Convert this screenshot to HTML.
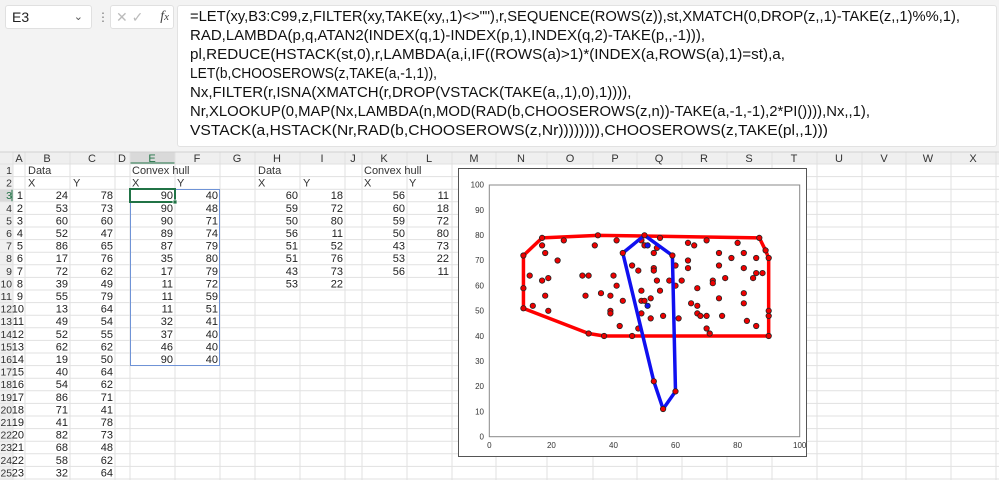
<!DOCTYPE html>
<html><head><meta charset="utf-8"><style>
html,body{margin:0;padding:0;width:999px;height:480px;overflow:hidden;background:#f3f3f3;font-family:"Liberation Sans",Arial,sans-serif}
.abs{position:absolute}
</style></head><body>
<div class="abs" style="left:5px;top:5px;width:85px;height:22px;background:#fff;border:1px solid #e0e0e0;border-radius:3px;font-size:14px;line-height:22px;color:#222"><span style="padding-left:6px">E3</span><span style="position:absolute;right:8px;top:0;font-size:11px;color:#555">&#8964;</span></div>
<div class="abs" style="left:97px;top:10px;color:#777;font-size:12px;">&#8942;</div>
<div class="abs" style="left:110px;top:5px;width:62px;height:22px;background:#fff;border:1px solid #e0e0e0;border-radius:3px;font-size:14px;line-height:22px;color:#bbb"><span style="padding-left:5px">&#10005;</span> <span>&#10003;</span><span style="position:absolute;right:4px;color:#444;font-family:'Liberation Serif',serif;font-style:italic;font-size:14px">f<span style="font-size:11px">x</span></span></div>
<div class="abs" style="left:177px;top:5px;width:818px;height:140px;background:#fff;border:1px solid #e2e2e2;border-radius:3px"></div>
<svg class="abs" style="left:0;top:0" width="999" height="480" font-family="Liberation Sans, Arial, sans-serif">
<g font-size="15" fill="#111">
<text x="190" y="21" textLength="770" lengthAdjust="spacingAndGlyphs">=LET(xy,B3:C99,z,FILTER(xy,TAKE(xy,,1)&lt;&gt;""),r,SEQUENCE(ROWS(z)),st,XMATCH(0,DROP(z,,1)-TAKE(z,,1)%%,1),</text>
<text x="190" y="40">RAD,LAMBDA(p,q,ATAN2(INDEX(q,1)-INDEX(p,1),INDEX(q,2)-TAKE(p,,-1))),</text>
<text x="190" y="59" textLength="595" lengthAdjust="spacingAndGlyphs">pl,REDUCE(HSTACK(st,0),r,LAMBDA(a,i,IF((ROWS(a)&gt;1)*(INDEX(a,ROWS(a),1)=st),a,</text>
<text x="190" y="78" textLength="247" lengthAdjust="spacingAndGlyphs">LET(b,CHOOSEROWS(z,TAKE(a,-1,1)),</text>
<text x="190" y="97">Nx,FILTER(r,ISNA(XMATCH(r,DROP(VSTACK(TAKE(a,,1),0),1)))),</text>
<text x="190" y="116" textLength="680" lengthAdjust="spacingAndGlyphs">Nr,XLOOKUP(0,MAP(Nx,LAMBDA(n,MOD(RAD(b,CHOOSEROWS(z,n))-TAKE(a,-1,-1),2*PI()))),Nx,,1),</text>
<text x="190" y="135" textLength="638" lengthAdjust="spacingAndGlyphs">VSTACK(a,HSTACK(Nr,RAD(b,CHOOSEROWS(z,Nr)))))))),CHOOSEROWS(z,TAKE(pl,,1)))</text>
</g>
<rect x="0" y="152" width="999" height="328" fill="#fff"/>
<rect x="0" y="152" width="999" height="12" fill="#efefef"/>
<rect x="0" y="152" width="13" height="328" fill="#efefef"/>
<rect x="130" y="152" width="45" height="12" fill="#d9d9d9"/>
<rect x="130" y="162.5" width="45" height="1.5" fill="#217346"/>
<rect x="0" y="189.2" width="13" height="12.6" fill="#d9d9d9"/>
<rect x="11.5" y="189.2" width="1.5" height="12.6" fill="#217346"/>
<g stroke="#e1e1e1" stroke-width="1">
<path d="M13 152V480M25 152V480M70 152V480M115 152V480M130 152V480M175 152V480M220 152V480M255 152V480M300 152V480M345 152V480M362 152V480M407 152V480M452 152V480M496 152V480M547 152V480M593 152V480M637 152V480M682 152V480M727 152V480M772 152V480M817 152V480M862 152V480M906 152V480M951 152V480M996 152V480"/>
<path d="M0 164H999M0 176.6H999M0 189.2H999M0 201.8H999M0 214.4H999M0 227H999M0 239.6H999M0 252.2H999M0 264.8H999M0 277.4H999M0 290H999M0 302.6H999M0 315.2H999M0 327.8H999M0 340.4H999M0 353H999M0 365.6H999M0 378.2H999M0 390.8H999M0 403.4H999M0 416H999M0 428.6H999M0 441.2H999M0 453.8H999M0 466.4H999M0 479H999"/>
</g>
<path d="M0 152H999" stroke="#d0d0d0"/>
<g font-size="11" fill="#333" text-anchor="middle">
<text x="19" y="162">A</text><text x="47" y="162">B</text><text x="92" y="162">C</text><text x="122" y="162">D</text><text x="152" y="162" fill="#217346">E</text><text x="197" y="162">F</text><text x="237" y="162">G</text><text x="277" y="162">H</text><text x="322" y="162">I</text><text x="353" y="162">J</text><text x="384" y="162">K</text><text x="429" y="162">L</text><text x="474" y="162">M</text><text x="521" y="162">N</text><text x="570" y="162">O</text><text x="615" y="162">P</text><text x="659" y="162">Q</text><text x="704" y="162">R</text><text x="749" y="162">S</text><text x="794" y="162">T</text><text x="839" y="162">U</text><text x="884" y="162">V</text><text x="928" y="162">W</text><text x="973" y="162">X</text>
</g>
<g font-size="10.5" fill="#333" text-anchor="end">
<text x="12" y="174">1</text><text x="12" y="186.6">2</text><text x="12" y="199.2" fill="#217346">3</text><text x="12" y="211.8">4</text><text x="12" y="224.4">5</text><text x="12" y="237">6</text><text x="12" y="249.6">7</text><text x="12" y="262.2">8</text><text x="12" y="274.8">9</text><text x="12" y="287.4" textLength="11.5" lengthAdjust="spacingAndGlyphs">10</text><text x="12" y="300" textLength="11.5" lengthAdjust="spacingAndGlyphs">11</text><text x="12" y="312.6" textLength="11.5" lengthAdjust="spacingAndGlyphs">12</text><text x="12" y="325.2" textLength="11.5" lengthAdjust="spacingAndGlyphs">13</text><text x="12" y="337.8" textLength="11.5" lengthAdjust="spacingAndGlyphs">14</text><text x="12" y="350.4" textLength="11.5" lengthAdjust="spacingAndGlyphs">15</text><text x="12" y="363" textLength="11.5" lengthAdjust="spacingAndGlyphs">16</text><text x="12" y="375.6" textLength="11.5" lengthAdjust="spacingAndGlyphs">17</text><text x="12" y="388.2" textLength="11.5" lengthAdjust="spacingAndGlyphs">18</text><text x="12" y="400.8" textLength="11.5" lengthAdjust="spacingAndGlyphs">19</text><text x="12" y="413.4" textLength="11.5" lengthAdjust="spacingAndGlyphs">20</text><text x="12" y="426" textLength="11.5" lengthAdjust="spacingAndGlyphs">21</text><text x="12" y="438.6" textLength="11.5" lengthAdjust="spacingAndGlyphs">22</text><text x="12" y="451.2" textLength="11.5" lengthAdjust="spacingAndGlyphs">23</text><text x="12" y="463.8" textLength="11.5" lengthAdjust="spacingAndGlyphs">24</text><text x="12" y="476.4" textLength="11.5" lengthAdjust="spacingAndGlyphs">25</text>
</g>
<g font-size="11" fill="#333">
<text x="28" y="174">Data</text><text x="132" y="174">Convex hull</text><text x="258" y="174">Data</text><text x="364" y="174">Convex hull</text>
<text x="28" y="186.6">X</text><text x="73" y="186.6">Y</text><text x="132" y="186.6">X</text><text x="177" y="186.6">Y</text><text x="258" y="186.6">X</text><text x="303" y="186.6">Y</text><text x="364" y="186.6">X</text><text x="409" y="186.6">Y</text>
</g>
<g font-size="11" fill="#222" text-anchor="end">
<text x="23" y="199.2">1</text><text x="23" y="211.8">2</text><text x="23" y="224.4">3</text><text x="23" y="237">4</text><text x="23" y="249.6">5</text><text x="23" y="262.2">6</text><text x="23" y="274.8">7</text><text x="23" y="287.4">8</text><text x="23" y="300">9</text><text x="24" y="312.6">10</text><text x="24" y="325.2">11</text><text x="24" y="337.8">12</text><text x="24" y="350.4">13</text><text x="24" y="363">14</text><text x="24" y="375.6">15</text><text x="24" y="388.2">16</text><text x="24" y="400.8">17</text><text x="24" y="413.4">18</text><text x="24" y="426">19</text><text x="24" y="438.6">20</text><text x="24" y="451.2">21</text><text x="24" y="463.8">22</text><text x="24" y="476.4">23</text>
<text x="68" y="199.2">24</text><text x="68" y="211.8">53</text><text x="68" y="224.4">60</text><text x="68" y="237">52</text><text x="68" y="249.6">86</text><text x="68" y="262.2">17</text><text x="68" y="274.8">72</text><text x="68" y="287.4">39</text><text x="68" y="300">55</text><text x="68" y="312.6">13</text><text x="68" y="325.2">49</text><text x="68" y="337.8">52</text><text x="68" y="350.4">62</text><text x="68" y="363">19</text><text x="68" y="375.6">40</text><text x="68" y="388.2">54</text><text x="68" y="400.8">86</text><text x="68" y="413.4">71</text><text x="68" y="426">41</text><text x="68" y="438.6">82</text><text x="68" y="451.2">68</text><text x="68" y="463.8">58</text><text x="68" y="476.4">32</text>
<text x="113" y="199.2">78</text><text x="113" y="211.8">73</text><text x="113" y="224.4">60</text><text x="113" y="237">47</text><text x="113" y="249.6">65</text><text x="113" y="262.2">76</text><text x="113" y="274.8">62</text><text x="113" y="287.4">49</text><text x="113" y="300">79</text><text x="113" y="312.6">64</text><text x="113" y="325.2">54</text><text x="113" y="337.8">55</text><text x="113" y="350.4">62</text><text x="113" y="363">50</text><text x="113" y="375.6">64</text><text x="113" y="388.2">62</text><text x="113" y="400.8">71</text><text x="113" y="413.4">41</text><text x="113" y="426">78</text><text x="113" y="438.6">73</text><text x="113" y="451.2">48</text><text x="113" y="463.8">62</text><text x="113" y="476.4">64</text>
<text x="173" y="199.2">90</text><text x="173" y="211.8">90</text><text x="173" y="224.4">90</text><text x="173" y="237">89</text><text x="173" y="249.6">87</text><text x="173" y="262.2">35</text><text x="173" y="274.8">17</text><text x="173" y="287.4">11</text><text x="173" y="300">11</text><text x="173" y="312.6">11</text><text x="173" y="325.2">32</text><text x="173" y="337.8">37</text><text x="173" y="350.4">46</text><text x="173" y="363">90</text>
<text x="218" y="199.2">40</text><text x="218" y="211.8">48</text><text x="218" y="224.4">71</text><text x="218" y="237">74</text><text x="218" y="249.6">79</text><text x="218" y="262.2">80</text><text x="218" y="274.8">79</text><text x="218" y="287.4">72</text><text x="218" y="300">59</text><text x="218" y="312.6">51</text><text x="218" y="325.2">41</text><text x="218" y="337.8">40</text><text x="218" y="350.4">40</text><text x="218" y="363">40</text>
<text x="298" y="199.2">60</text><text x="298" y="211.8">59</text><text x="298" y="224.4">50</text><text x="298" y="237">56</text><text x="298" y="249.6">51</text><text x="298" y="262.2">51</text><text x="298" y="274.8">43</text><text x="298" y="287.4">53</text>
<text x="343" y="199.2">18</text><text x="343" y="211.8">72</text><text x="343" y="224.4">80</text><text x="343" y="237">11</text><text x="343" y="249.6">52</text><text x="343" y="262.2">76</text><text x="343" y="274.8">73</text><text x="343" y="287.4">22</text>
<text x="405" y="199.2">56</text><text x="405" y="211.8">60</text><text x="405" y="224.4">59</text><text x="405" y="237">50</text><text x="405" y="249.6">43</text><text x="405" y="262.2">53</text><text x="405" y="274.8">56</text>
<text x="449" y="199.2">11</text><text x="449" y="211.8">18</text><text x="449" y="224.4">72</text><text x="449" y="237">80</text><text x="449" y="249.6">73</text><text x="449" y="262.2">22</text><text x="449" y="274.8">11</text>
</g>
<rect x="130.5" y="189.5" width="89" height="176" fill="none" stroke="#6f93d6" stroke-width="1"/>
<rect x="130" y="189" width="45" height="13" fill="none" stroke="#217346" stroke-width="2"/>
<rect x="173" y="200" width="4" height="4" fill="#217346" stroke="#fff" stroke-width="0.8"/>
<rect x="458.5" y="168.5" width="348" height="288" fill="#fff" stroke="#555" stroke-width="1"/>
<rect x="489.3" y="185" width="310.4" height="251.7" fill="none" stroke="#888" stroke-width="1"/>
<g font-size="8" fill="#333" text-anchor="end">
<text x="484" y="439.5">0</text><text x="484" y="414.3">10</text><text x="484" y="389.1">20</text><text x="484" y="364">30</text><text x="484" y="338.8">40</text><text x="484" y="313.6">50</text><text x="484" y="288.4">60</text><text x="484" y="263.2">70</text><text x="484" y="238.1">80</text><text x="484" y="212.9">90</text><text x="484" y="187.7">100</text>
</g>
<g font-size="8" fill="#333" text-anchor="middle">
<text x="489.3" y="448">0</text><text x="551.4" y="448">20</text><text x="613.5" y="448">40</text><text x="675.5" y="448">60</text><text x="737.6" y="448">80</text><text x="799.7" y="448">100</text>
</g>
<g transform="translate(489.3,436.7) scale(3.104,-2.517)">
<polyline fill="none" stroke="#ff0000" stroke-width="3.5" vector-effect="non-scaling-stroke" stroke-linejoin="round" points="90,40 90,48 90,50 90,71 89,74 87,79 35,80 17,79 11,72 11,59 11,51 32,41 37,40 46,40 90,40"/>
</g>
<g fill="#ee0000" stroke="#222" stroke-width="0.8" transform="translate(489.3,436.7)">
<circle r="2.7" cx="52.8" cy="-198.8"/><circle r="2.7" cx="52.8" cy="-191.3"/><circle r="2.7" cx="55.9" cy="-183.7"/><circle r="2.7" cx="74.5" cy="-196.3"/><circle r="2.7" cx="68.3" cy="-176.2"/><circle r="2.7" cx="40.4" cy="-161.1"/><circle r="2.7" cx="52.8" cy="-156.1"/><circle r="2.7" cx="59" cy="-158.6"/><circle r="2.7" cx="55.9" cy="-141"/><circle r="2.7" cx="59" cy="-125.9"/><circle r="2.7" cx="43.5" cy="-130.9"/><circle r="2.7" cx="34.1" cy="-181.2"/><circle r="2.7" cx="34.1" cy="-148.5"/><circle r="2.7" cx="34.1" cy="-128.4"/>
<circle r="2.7" cx="108.6" cy="-201.4"/><circle r="2.7" cx="105.5" cy="-191.3"/><circle r="2.7" cx="93.1" cy="-161.1"/><circle r="2.7" cx="99.3" cy="-161.1"/><circle r="2.7" cx="96.2" cy="-141"/><circle r="2.7" cx="111.7" cy="-143.5"/><circle r="2.7" cx="99.3" cy="-103.2"/><circle r="2.7" cx="114.8" cy="-100.7"/>
<circle r="2.7" cx="127.3" cy="-196.3"/><circle r="2.7" cx="124.2" cy="-161.1"/><circle r="2.7" cx="127.3" cy="-151"/><circle r="2.7" cx="121.1" cy="-141"/><circle r="2.7" cx="121.1" cy="-125.9"/><circle r="2.7" cx="121.1" cy="-123.3"/><circle r="2.7" cx="133.5" cy="-135.9"/><circle r="2.7" cx="130.4" cy="-110.7"/><circle r="2.7" cx="142.8" cy="-100.7"/>
<circle r="2.7" cx="152.1" cy="-196.3"/><circle r="2.7" cx="155.2" cy="-191.3"/><circle r="2.7" cx="142.8" cy="-171.2"/><circle r="2.7" cx="149" cy="-166.1"/><circle r="2.7" cx="164.5" cy="-183.7"/><circle r="2.7" cx="164.5" cy="-168.6"/><circle r="2.7" cx="164.5" cy="-166.1"/><circle r="2.7" cx="167.6" cy="-188.8"/><circle r="2.7" cx="170.7" cy="-198.8"/><circle r="2.7" cx="152.1" cy="-146"/><circle r="2.7" cx="152.1" cy="-135.9"/><circle r="2.7" cx="155.2" cy="-135.9"/><circle r="2.7" cx="161.4" cy="-138.4"/><circle r="2.7" cx="152.1" cy="-123.3"/><circle r="2.7" cx="161.4" cy="-118.3"/><circle r="2.7" cx="149" cy="-108.2"/><circle r="2.7" cx="167.6" cy="-156.1"/><circle r="2.7" cx="170.7" cy="-146"/><circle r="2.7" cx="173.8" cy="-120.8"/><circle r="2.7" cx="180" cy="-156.1"/><circle r="2.7" cx="186.2" cy="-171.2"/><circle r="2.7" cx="186.2" cy="-151"/><circle r="2.7" cx="192.4" cy="-156.1"/><circle r="2.7" cx="189.3" cy="-118.3"/>
<circle r="2.7" cx="198.7" cy="-193.8"/><circle r="2.7" cx="204.9" cy="-191.3"/><circle r="2.7" cx="198.7" cy="-176.2"/><circle r="2.7" cx="198.7" cy="-168.6"/><circle r="2.7" cx="208" cy="-148.5"/><circle r="2.7" cx="201.8" cy="-133.4"/><circle r="2.7" cx="208" cy="-130.9"/><circle r="2.7" cx="208" cy="-123.3"/><circle r="2.7" cx="211.1" cy="-120.8"/><circle r="2.7" cx="217.3" cy="-120.8"/><circle r="2.7" cx="217.3" cy="-108.2"/><circle r="2.7" cx="220.4" cy="-103.2"/><circle r="2.7" cx="217.3" cy="-196.3"/>
<circle r="2.7" cx="223.5" cy="-156.1"/><circle r="2.7" cx="223.5" cy="-153.5"/><circle r="2.7" cx="229.7" cy="-183.7"/><circle r="2.7" cx="229.7" cy="-171.2"/><circle r="2.7" cx="235.9" cy="-158.6"/><circle r="2.7" cx="229.7" cy="-138.4"/><circle r="2.7" cx="232.8" cy="-120.8"/><circle r="2.7" cx="242.1" cy="-178.7"/><circle r="2.7" cx="248.3" cy="-193.8"/><circle r="2.7" cx="254.5" cy="-183.7"/><circle r="2.7" cx="254.5" cy="-168.6"/><circle r="2.7" cx="254.5" cy="-143.5"/><circle r="2.7" cx="254.5" cy="-133.4"/><circle r="2.7" cx="257.6" cy="-115.8"/><circle r="2.7" cx="266.9" cy="-178.7"/><circle r="2.7" cx="266.9" cy="-163.6"/><circle r="2.7" cx="273.2" cy="-163.6"/><circle r="2.7" cx="263.8" cy="-158.6"/><circle r="2.7" cx="266.9" cy="-110.7"/><circle r="2.7" cx="270" cy="-198.8"/><circle r="2.7" cx="276.3" cy="-186.3"/><circle r="2.7" cx="279.4" cy="-178.7"/><circle r="2.7" cx="279.4" cy="-125.9"/><circle r="2.7" cx="279.4" cy="-120.8"/><circle r="2.7" cx="279.4" cy="-100.7"/>
</g>
<g transform="translate(489.3,436.7)">
<polyline fill="none" stroke="#1010f0" stroke-width="3.5" stroke-linejoin="round" points="173.8,-27.7 186.2,-45.3 183.1,-181.2 155.2,-201.4 133.5,-183.7 164.5,-55.4 173.8,-27.7"/>
<g fill="#ee0000" stroke="#222" stroke-width="0.8">
<circle r="2.7" cx="173.8" cy="-27.7"/><circle r="2.7" cx="186.2" cy="-45.3"/><circle r="2.7" cx="183.1" cy="-181.2"/><circle r="2.7" cx="155.2" cy="-201.4"/><circle r="2.7" cx="133.5" cy="-183.7"/><circle r="2.7" cx="164.5" cy="-55.4"/>
</g>
<circle r="2.7" cx="158.3" cy="-191.3" fill="#1010f0" stroke="#222" stroke-width="0.8"/>
<circle r="2.7" cx="158.3" cy="-130.9" fill="#1010f0" stroke="#222" stroke-width="0.8"/>
</g>
</svg>
</body></html>
